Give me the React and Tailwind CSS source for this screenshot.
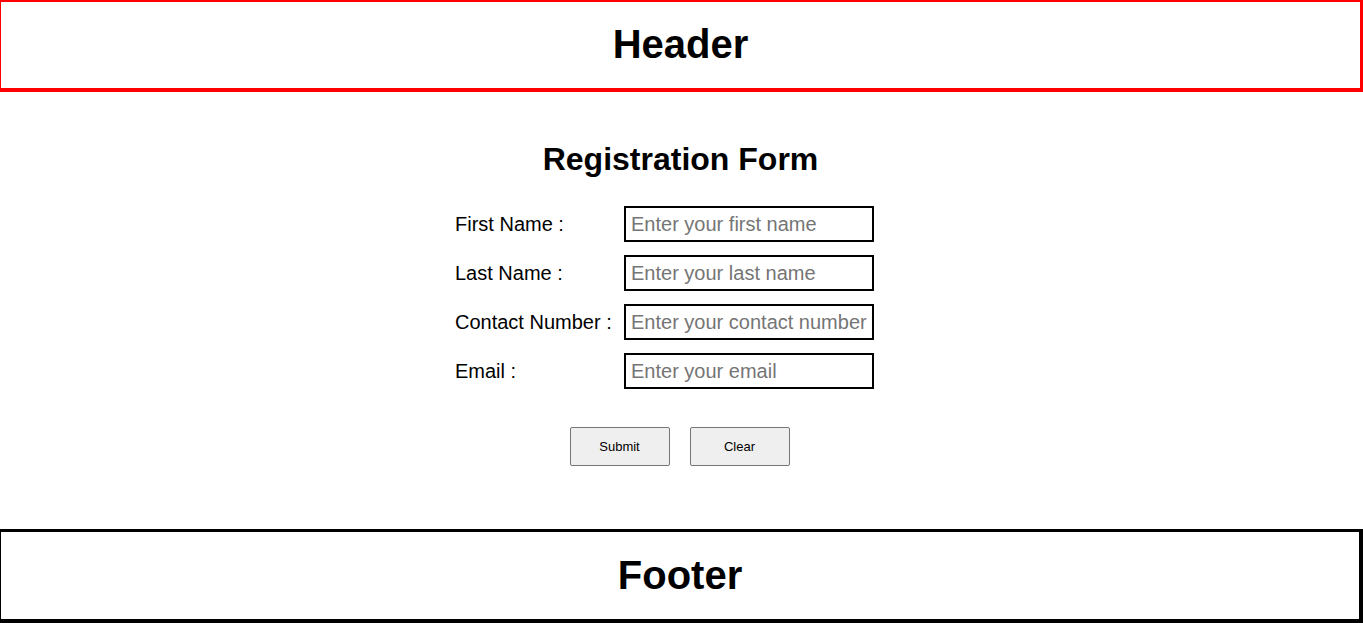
export default function App() {
  const rows = [
    ["First Name :", "Enter your first name"],
    ["Last Name :", "Enter your last name"],
    ["Contact Number :", "Enter your contact number"],
    ["Email :", "Enter your email"],
  ];
  return (
    <div className="w-[1363px] h-[623px] bg-white text-black overflow-hidden flex flex-col" style={{ fontFamily: '"Liberation Sans", Arial, sans-serif' }}>
      <header className="h-[92px] shrink-0 border-t-2 border-l border-r-[3px] border-b-[4px] border-[#ff0000] flex items-center justify-center">
        <h1 className="text-[40px] font-bold leading-none mb-[2px]">Header</h1>
      </header>
      <main className="flex flex-col items-center">
        <h2 className="mt-[49px] text-[32px] font-bold leading-[37px] ml-[-2px]">Registration Form</h2>
        <div className="mt-[28px] flex flex-col gap-[13px] ml-[-34px]">
          {rows.map(([label, ph]) => (
            <div key={label} className="flex items-center">
              <label className="w-[169px] text-[20px] leading-[24px]">{label}</label>
              <input
                placeholder={ph}
                className="w-[250px] h-[36px] border-2 border-black px-[5px] text-[20px] placeholder:text-[#757575] outline-none"
                style={{ fontFamily: '"Liberation Sans", Arial, sans-serif' }}
              />
            </div>
          ))}
        </div>
        <div className="mt-[38px] flex gap-[20px] ml-[-4px]">
          <button className="w-[100px] h-[39px] bg-[#efefef] border border-[#767676] rounded-[2px] text-[13px]">Submit</button>
          <button className="w-[100px] h-[39px] bg-[#efefef] border border-[#767676] rounded-[2px] text-[13px]">Clear</button>
        </div>
      </main>
      <footer className="mt-[63px] h-[94px] shrink-0 border-t-[3px] border-l border-r-[4px] border-b-[4px] border-black flex items-center justify-center">
        <h2 className="text-[40px] font-bold leading-none mb-[2px]">Footer</h2>
      </footer>
    </div>
  );
}
